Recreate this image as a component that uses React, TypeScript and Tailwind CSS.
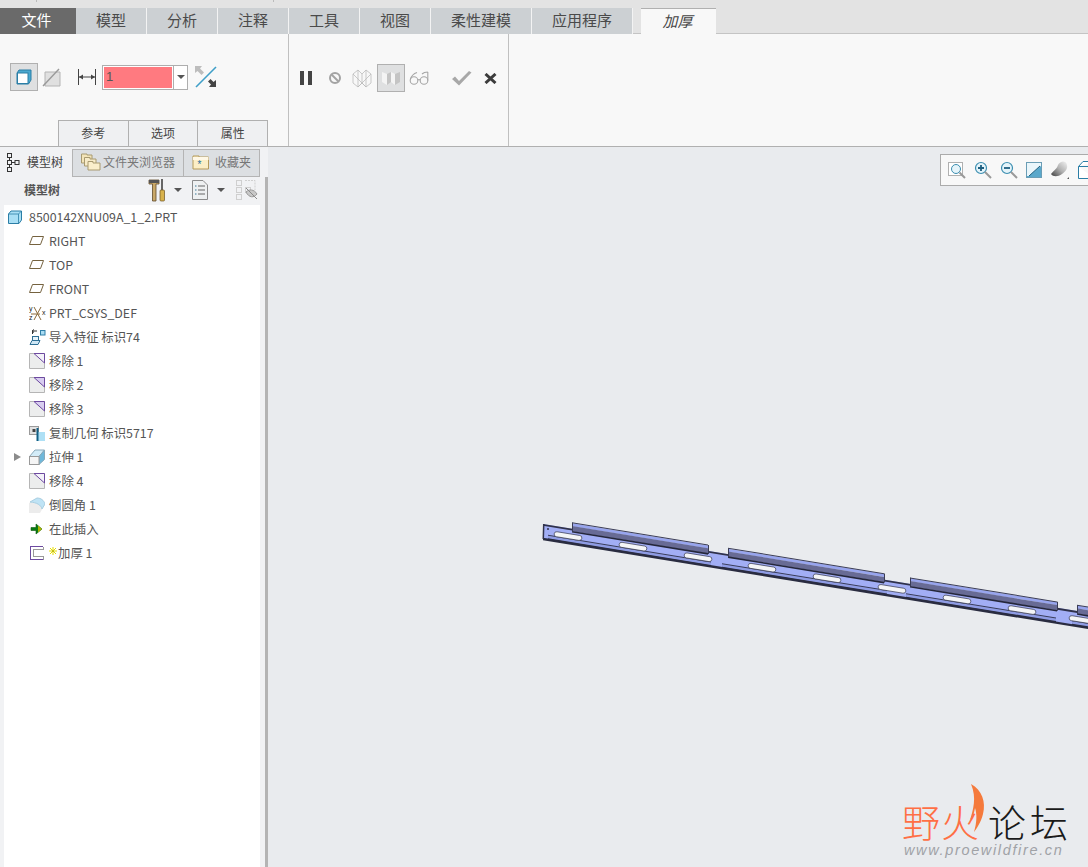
import type { ReactNode } from 'react'

const font = "font-['Noto_Sans_CJK_SC','Noto_Sans',sans-serif]"

const ribbonTabs = [
  { label: '模型', w: 'w-[71px]' },
  { label: '分析', w: 'w-[71px]' },
  { label: '注释', w: 'w-[71px]' },
  { label: '工具', w: 'w-[71px]' },
  { label: '视图', w: 'w-[71px]' },
  { label: '柔性建模', w: 'w-[101px]' },
  { label: '应用程序', w: 'w-[101px]' },
]

function Icon({ w = 16, h = 16, children }: { w?: number; h?: number; children: ReactNode }) {
  return (
    <svg width={w} height={h} viewBox={`0 0 ${w} ${h}`} fill="none" className="shrink-0">
      {children}
    </svg>
  )
}

function PlaneIcon() {
  return (
    <Icon>
      <path d="M3.5 3.5H14.5L11.5 11.5H.5Z" stroke="#75623f" fill="#fff" />
    </Icon>
  )
}

function RemoveIcon({ filled }: { filled?: boolean }) {
  return (
    <Icon>
      <path d="M.5.5H15.5V15.5H.5Z" fill="#eceded" stroke="#b5b5b5" />
      <path d="M5 .5H15.5V10Z" fill={filled ? '#d8cdf0' : '#f4f2f9'} />
      <path d="M5 .5H15.5V10Z" stroke="#6d4aa0" />
    </Icon>
  )
}

function CsysIcon() {
  return (
    <Icon w={18}>
      <path d="M5 2L12 15M12 2L5 15M2 9H11" stroke="#8a6a3a" />
      <text x="0" y="6" fontSize="7" fill="#222" fontFamily="Liberation Sans">y</text>
      <text x="0" y="15" fontSize="7" fill="#222" fontFamily="Liberation Sans">z</text>
      <text x="13" y="10" fontSize="7" fill="#222" fontFamily="Liberation Sans">x</text>
    </Icon>
  )
}

function ImportIcon() {
  return (
    <Icon w={17}>
      <path d="M3 11.5H11L9 15.5H1Z" fill="#cfe7f5" stroke="#2f6f95" />
      <rect x="3.5" y="7.5" width="6" height="4" fill="#e7f4fb" stroke="#2f6f95" />
      <rect x="11.5" y="1.5" width="4.5" height="4.5" fill="#a9dcf2" stroke="#2f7fa8" />
      <path d="M8 2H3.5M5 .5L3 2L5 3.5M3.5 2V5" stroke="#333" />
    </Icon>
  )
}

function CopyGeomIcon() {
  return (
    <Icon>
      <rect x=".5" y="1.5" width="9" height="8" fill="#e2e2e2" stroke="#9a9a9a" />
      <rect x="3.5" y="4" width="3" height="3" fill="#444" />
      <rect x="8" y="7" width="8" height="9" fill="#aee0f5" />
      <path d="M8.5 3V16" stroke="#125f84" strokeWidth="2" />
    </Icon>
  )
}

function ExtrudeIcon() {
  return (
    <Icon>
      <path d="M.5 7.5L6 1H15.5L10 7.5Z" fill="#d3ecf8" stroke="#8aa9ba" />
      <path d="M10 7.5L15.5 1V10.5L10 15.5Z" fill="#6fb8da" stroke="#8aa9ba" />
      <rect x=".5" y="7.5" width="9.5" height="8" fill="#f5f5f5" stroke="#999" />
    </Icon>
  )
}

function RoundIcon() {
  return (
    <Icon>
      <path d="M0 6L9 1C12 1 15 3 16 7L11 16H0Z" fill="#ececec" />
      <path d="M1 5L8 1C12 1 15 3.5 16 7L13 12C12 8 8 5.5 1 5Z" fill="#bfe3f5" stroke="#a9cfe2" />
    </Icon>
  )
}

function InsertIcon() {
  return (
    <Icon>
      <path d="M2 6.5H7V3L13 8L7 13V9.5H2Z" fill="#0a7a12" stroke="#0b5c10" strokeWidth=".6" />
      <path d="M9 4.5L13 8L9 11.5Z" fill="#d4c400" opacity=".8" />
    </Icon>
  )
}

function ThickenIcon() {
  return (
    <Icon>
      <path d="M14 1.5H1.5V14.5H14" stroke="#6d4aa0" shapeRendering="crispEdges" />
      <path d="M14 1.5V4.5H4.5V11.5H14V14.5" stroke="#9a9a9a" shapeRendering="crispEdges" />
    </Icon>
  )
}

function NewMark() {
  return (
    <svg width="8" height="8" viewBox="0 0 8 8" fill="none" className="relative -top-[3px] mr-[1px] inline-block">
      <path d="M4 0V8M0 4H8M1 1L7 7M7 1L1 7" stroke="#e6dc00" strokeWidth="1" />
      <circle cx="4" cy="4" r=".6" fill="#555" />
    </svg>
  )
}

function PartIcon() {
  return (
    <Icon w={14} h={14}>
      <path d="M3 1H13.5V10L11 13.5H.5V4Z" fill="#a9dff5" stroke="#2b7ea6" />
      <path d="M.5 4H10.5L13.5 1M10.5 4V13.5" stroke="#2b7ea6" strokeWidth=".8" />
    </Icon>
  )
}

function FolderIcon({ star }: { star?: boolean }) {
  if (star) {
    return (
      <Icon w={18} h={18}>
        <path d="M1 4V3H7V4H16.5V16H1Z" fill="#fbeec6" stroke="#b59a5a" />
        <path d="M1 4H16.5V7H1Z" fill="#fff8e6" />
        <text x="5.5" y="14.5" fontSize="10" fill="#1d6fa0" fontFamily="Liberation Sans">*</text>
      </Icon>
    )
  }
  return (
    <Icon w={20} h={18}>
      <path d="M.5 2V1H6V2H11V10H.5Z" fill="#f3e4b8" stroke="#a89a70" />
      <path d="M3.5 6V4.5H9V6H15V13H3.5Z" fill="#f7ebc8" stroke="#a89a70" />
      <path d="M7 10V8.5H12V10H19V17H7Z" fill="#faeecb" stroke="#a89a70" />
    </Icon>
  )
}

function TreeNodesIcon() {
  return (
    <Icon w={14} h={20}>
      <rect x="1.5" y="1.5" width="4" height="4" stroke="#333" />
      <rect x="1.5" y="8.5" width="4" height="4" stroke="#333" />
      <rect x="1.5" y="15.5" width="4" height="4" stroke="#333" />
      <rect x="9" y="8.5" width="4" height="4" stroke="#333" />
      <path d="M3.5 5.5V8.5M3.5 12.5V15.5M5.5 10.5H9" stroke="#333" />
    </Icon>
  )
}

function ToolsIcon() {
  return (
    <Icon w={18} h={24}>
      <path d="M1 2H11V6H8V23H4.5V6H1Z" fill="#c9a868" stroke="#5f4a28" strokeWidth=".8" />
      <path d="M1 2H11V5H1Z" fill="#555" />
      <rect x="13" y="1" width="2" height="11" fill="#666" />
      <rect x="12" y="12" width="4.5" height="11" rx="1" fill="#d8b24c" stroke="#6d5522" strokeWidth=".7" />
    </Icon>
  )
}

function ListDocIcon() {
  return (
    <Icon w={16} h={20}>
      <path d="M.5.5H11L15.5 5V19.5H.5Z" fill="#eef0f1" stroke="#8b8b8b" />
      <path d="M6 6H13M6 10H13M6 14H13" stroke="#666" />
      <path d="M3 6H4.5M3 10H4.5M3 14H4.5" stroke="#3a7a9a" />
    </Icon>
  )
}

function TreeHideIcon() {
  return (
    <Icon w={22} h={20}>
      <g stroke="#cfcfcf">
        <rect x=".5" y=".5" width="5" height="5" />
        <rect x=".5" y="7.5" width="5" height="5" />
        <rect x=".5" y="14.5" width="5" height="5" />
        <rect x="9.5" y="7.5" width="5" height="5" />
        <path d="M9 .5H19V10" strokeDasharray="2 1" />
      </g>
      <path d="M10 12C13 9 18 9 21 14C18 18 13 18 10 12Z" fill="#c8c8c8" stroke="#9a9a9a" />
      <path d="M10 8L21 19" stroke="#8a8a8a" />
    </Icon>
  )
}

function DropArrow() {
  return <span className="h-0 w-0 border-x-[4px] border-t-[4px] border-x-transparent border-t-[#555]" />
}

function TreeRow({ icon, label, expand }: { icon: ReactNode; label: ReactNode; expand?: boolean }) {
  return (
    <div className="relative flex h-6 items-center gap-1 pl-[25px]">
      {expand && (
        <span className="absolute left-[10px] top-[8px] h-0 w-0 border-y-[4px] border-l-[7px] border-y-transparent border-l-[#8c8c8c]" />
      )}
      <span className="flex w-[16px] shrink-0">{icon}</span>
      <span className="whitespace-nowrap">{label}</span>
    </div>
  )
}

function ModelTree() {
  return (
    <div className="h-full bg-white text-[12.4px] text-[#555]">
      <div className="flex h-6 items-center gap-[7px] pl-[4px]">
        <PartIcon />
        <span>8500142XNU09A_1_2.PRT</span>
      </div>
      <TreeRow icon={<PlaneIcon />} label="RIGHT" />
      <TreeRow icon={<PlaneIcon />} label="TOP" />
      <TreeRow icon={<PlaneIcon />} label="FRONT" />
      <TreeRow icon={<CsysIcon />} label="PRT_CSYS_DEF" />
      <TreeRow icon={<ImportIcon />} label="导入特征 标识74" />
      <TreeRow icon={<RemoveIcon />} label="移除 1" />
      <TreeRow icon={<RemoveIcon filled />} label="移除 2" />
      <TreeRow icon={<RemoveIcon filled />} label="移除 3" />
      <TreeRow icon={<CopyGeomIcon />} label="复制几何 标识5717" />
      <TreeRow expand icon={<ExtrudeIcon />} label="拉伸 1" />
      <TreeRow icon={<RemoveIcon />} label="移除 4" />
      <TreeRow icon={<RoundIcon />} label="倒圆角 1" />
      <TreeRow icon={<InsertIcon />} label="在此插入" />
      <TreeRow
        icon={<ThickenIcon />}
        label={
          <>
            <NewMark />
            加厚 1
          </>
        }
      />
    </div>
  )
}

function LeftPanel() {
  return (
    <aside className="flex h-full w-[268px] shrink-0 flex-col bg-[#f1f2f4]">
      <div className="flex h-[30px] items-end text-[12px]">
        <div className="flex h-[29px] w-[72px] items-center gap-[7px] pb-[2px] pl-[6px] text-[#444]">
          <TreeNodesIcon />
          <span>模型树</span>
        </div>
        <div className="flex h-[28px] w-[112px] items-center gap-[2px] border border-[#b4b4b4] bg-[#dcdfe2] pb-[2px] pl-[8px] text-[#777]">
          <FolderIcon />
          <span>文件夹浏览器</span>
        </div>
        <div className="flex h-[28px] w-[76px] items-center gap-[5px] border border-l-0 border-[#b4b4b4] bg-[#dcdfe2] pb-[2px] pl-[8px] text-[#777]">
          <FolderIcon star />
          <span>收藏夹</span>
        </div>
      </div>
      <div className="flex min-h-0 flex-1">
        <div className="flex min-w-0 flex-1 flex-col pl-[4px] pr-[5px]">
          <div className="flex h-[28px] items-center pb-[3px] pl-[20px] text-[12px] font-bold text-[#555]">
            <span className="w-[124px]">模型树</span>
            <ToolsIcon />
            <span className="ml-[8px] mr-[10px] flex"><DropArrow /></span>
            <ListDocIcon />
            <span className="ml-[9px] mr-[11px] flex"><DropArrow /></span>
            <TreeHideIcon />
          </div>
          <div className="min-h-0 flex-1">
            <ModelTree />
          </div>
        </div>
        <div className="w-[3px] bg-[#b4b4b4]" />
      </div>
    </aside>
  )
}

function RibbonTab({ label, w }: { label: string; w: string }) {
  return (
    <div className={`flex items-center justify-center border-r border-[#f3f3f3] bg-[#ccd0d3] pb-px text-[15px] text-[#4a4a4a] ${w}`}>
      {label}
    </div>
  )
}

function IconBox({ children, active }: { children: ReactNode; active?: boolean }) {
  return (
    <div
      className={`flex h-[28px] w-[28px] shrink-0 items-center justify-center ${
        active ? 'border border-[#b0b0b0] bg-[#dfe0e1]' : ''
      }`}
    >
      {children}
    </div>
  )
}

function ThickenControls() {
  return (
    <div className="flex h-[28px] items-center pl-[10px]">
      <IconBox active>
        <Icon>
          <path d="M3 1H15V11L12.5 15H1V4Z" fill="#4aa8cf" stroke="#2b7ea6" />
          <rect x="1.5" y="4" width="10.5" height="10.5" fill="#fff" stroke="#2b7ea6" />
        </Icon>
      </IconBox>
      <span className="ml-[4px] flex w-[20px]">
        <svg width="20" height="20" viewBox="0 0 20 20" fill="none">
          <path d="M3 5H18V19H3Z" fill="#e0e0e0" stroke="#b4b4b4" />
          <path d="M1 19L17 2" stroke="#999" strokeWidth="1.4" />
        </svg>
      </span>
      <span className="ml-[15px] flex w-[20px]">
        <svg width="20" height="18" viewBox="0 0 20 18" fill="none">
          <path d="M1.5 1V17M18.5 1V17M2 9H18" stroke="#444" />
          <path d="M2 9L6 6.5V11.5ZM18 9L14 6.5V11.5Z" fill="#444" />
        </svg>
      </span>
      <div className="ml-[5px] flex h-[25px] w-[86px] border border-[#aeaeae] bg-white">
        <div className="m-px flex w-[68px] items-center bg-[#ff7a80] pl-[2px] font-['Liberation_Sans',sans-serif] text-[13px] text-[#555]">
          1
        </div>
        <div className="flex flex-1 items-center justify-center border-l border-[#aeaeae]">
          <DropArrow />
        </div>
      </div>
      <span className="ml-[7px] flex">
        <svg width="22" height="22" viewBox="0 0 22 22" fill="none">
          <path d="M1 21L21 1" stroke="#3f9fc8" strokeWidth="1.6" />
          <path d="M0 0H7L5 2.5L9 6.5L6.5 9L2.5 5L0 7Z" fill="#bdbdbd" />
          <path d="M21 21H14L16 18.5L13 15.5L15.5 13L18.5 16L21 14Z" fill="#444" />
        </svg>
      </span>
    </div>
  )
}

function FlowControls() {
  return (
    <div className="flex h-[28px] items-center pl-[11px]">
      <span className="flex w-[12px] justify-between">
        <span className="h-[14px] w-[4px] bg-[#444]" />
        <span className="h-[14px] w-[4px] bg-[#444]" />
      </span>
      <span className="ml-[8px] flex w-[29px] justify-center">
        <svg width="14" height="14" viewBox="0 0 14 14" fill="none">
          <circle cx="7" cy="7" r="5" stroke="#a3a3a3" strokeWidth="2" />
          <path d="M3.5 3.5L10.5 10.5" stroke="#a3a3a3" strokeWidth="2" />
        </svg>
      </span>
      <span className="ml-[3px] flex w-[25px]">
        <svg width="20" height="20" viewBox="0 0 20 20" fill="none" stroke="#bbb" strokeWidth=".8">
          <path d="M1 6L6 2L10 6L14 2L19 6V15L14 19L10 15L6 19L1 15ZM6 2V19M14 2V19M1 6L14 19M19 6L6 19M10 6V15" />
        </svg>
      </span>
      <IconBox active>
        <svg width="18" height="16" viewBox="0 0 18 16" fill="none">
          <path d="M0 2L5 4V15L0 12Z" fill="#f4f4f4" />
          <path d="M5 4L9 2V12L5 15Z" fill="#c4c4c4" />
          <path d="M9 2L13 4V15L9 12Z" fill="#f4f4f4" />
          <path d="M13 4L18 2V12L13 15Z" fill="#c4c4c4" />
        </svg>
      </IconBox>
      <span className="ml-[4px] flex w-[42px]">
        <svg width="21" height="16" viewBox="0 0 21 16" fill="none" stroke="#a6a6a6" strokeWidth="1.1">
          <circle cx="5" cy="10.5" r="3.8" />
          <circle cx="15" cy="10.5" r="3.8" />
          <path d="M8.8 10Q10 9 11.2 10M1.3 9.5Q3 4 8 2.5M18.8 10.5V2M18.8 2Q15 2 13 4" />
        </svg>
      </span>
      <span className="flex w-[33px]">
        <svg width="21" height="16" viewBox="0 0 21 16" fill="none">
          <path d="M1 9L4 6.5L8 11L18 1L20.5 2.5L8 15.5Z" fill="#a8a8a8" />
        </svg>
      </span>
      <span className="flex">
        <svg width="13" height="11" viewBox="0 0 13 11" fill="none">
          <path d="M1.5 1L11.5 10M11.5 1L1.5 10" stroke="#3c3c3c" strokeWidth="3" />
        </svg>
      </span>
    </div>
  )
}

function Ribbon() {
  return (
    <div className="flex h-[113px] border-b border-[#b0b0b0] bg-[#f8f8f8]">
      <div className="flex h-full w-[289px] flex-col border-r border-[#c0c0c0]">
        <div className="mt-[29px]">
          <ThickenControls />
        </div>
        <div className="ml-[58px] mt-auto flex h-[26px] w-[210px] text-[12px] text-[#444]">
          {['参考', '选项', '属性'].map((t) => (
            <div
              key={t}
              className="flex flex-1 items-center justify-center border border-b-0 border-r-0 border-[#b0b0b0] bg-[#eff0f2] pb-[2px] last:border-r"
            >
              {t}
            </div>
          ))}
        </div>
      </div>
      <div className="h-full w-[220px] border-r border-[#c0c0c0] pt-[30px]">
        <FlowControls />
      </div>
    </div>
  )
}

function ViewToolbar() {
  return (
    <div className="absolute left-[672px] top-[7px] flex h-[32px] w-[160px] items-center gap-[8px] border border-[#ababab] bg-[#f8f8f8] pl-[7px]">
      <svg width="18" height="18" viewBox="0 0 18 18" fill="none">
        <rect x=".5" y="1.5" width="14" height="13" fill="#fff" stroke="#b0b0b0" />
        <circle cx="8" cy="8" r="4.5" fill="#e5f4fa" stroke="#3c8eb0" />
        <path d="M11.5 11.5L17 17" stroke="#999" strokeWidth="2" />
      </svg>
      <svg width="18" height="18" viewBox="0 0 18 18" fill="none">
        <circle cx="7" cy="7" r="5.5" fill="#e5f4fa" stroke="#3c8eb0" strokeWidth="1.2" />
        <path d="M4 7H10M7 4V10" stroke="#1d5f80" strokeWidth="1.8" />
        <path d="M11 11L17 17" stroke="#999" strokeWidth="2" />
      </svg>
      <svg width="18" height="18" viewBox="0 0 18 18" fill="none">
        <circle cx="7" cy="7" r="5.5" fill="#e5f4fa" stroke="#3c8eb0" strokeWidth="1.2" />
        <path d="M4 7H10" stroke="#1d5f80" strokeWidth="1.8" />
        <path d="M11 11L17 17" stroke="#999" strokeWidth="2" />
      </svg>
      <svg width="16" height="16" viewBox="0 0 16 16" fill="none">
        <rect x=".5" y=".5" width="15" height="15" fill="#5aa8cb" stroke="#6a9db5" />
        <path d="M1 1H15V4L12 6L3 14H1Z" fill="#eaf6fb" />
        <path d="M3 14L14 4" stroke="#1d5f80" />
      </svg>
      <svg width="20" height="20" viewBox="0 0 20 20" fill="none">
        <defs>
          <linearGradient id="shade" x1="0" y1="1" x2="1" y2="0">
            <stop offset="0" stopColor="#3f3f3f" />
            <stop offset="0.5" stopColor="#b0b0b0" />
            <stop offset="1" stopColor="#f2f2f2" />
          </linearGradient>
        </defs>
        <path d="M1 14C4 10 7 9 8 5C10 1 16 0 17 5C18 9 15 12 12 14C8 17 3 17 1 14Z" fill="url(#shade)" />
        <path d="M19 17V19H17Z" fill="#555" />
      </svg>
      <svg width="16" height="18" viewBox="0 0 16 18" fill="none">
        <path d="M.5 5.5L5 .5H16M.5 5.5H16M.5 5.5V17.5H16" stroke="#2b7ea6" fill="#fff" />
      </svg>
    </div>
  )
}

// the part is a long strip; y = line through its top left corner + offset v
const slope = 0.163
const y0 = (x: number) => 524 + slope * (x - 543)
const band = (x1: number, x2: number, v1: number, v2: number) =>
  `${x1},${y0(x1) + v1} ${x2},${y0(x2) + v1} ${x2},${y0(x2) + v2} ${x1},${y0(x1) + v2}`

const flanges = [
  [572, 708],
  [728, 884],
  [910, 1057],
  [1077, 1100],
]
const lowerStrips = [
  [548, 711],
  [722, 887],
  [906, 1056],
  [1072, 1100],
]
const slots = [568, 633, 698, 762, 827, 892, 957, 1022, 1083]

function Part() {
  return (
    <svg className="absolute inset-0" width="820" height="720" viewBox="268 147 820 720" fill="none">
      <polygon points={band(543, 1100, 0, 15)} fill="#a2aef5" />
      <polygon points={band(543, 1100, 0, 1.8)} fill="#30324a" />
      <polygon points={band(543, 1100, 13.8, 16.2)} fill="#2a2c40" />
      {lowerStrips.map(([a, b]) => (
        <g key={a}>
          <polygon points={band(a, b, 11, 13.8)} fill="#8f9ce4" />
          <polygon points={band(a, b, 10, 11)} fill="#383b58" />
          <polygon points={band(a, b, 13.5, 14.8)} fill="#2a2c40" />
        </g>
      ))}
      {flanges.map(([a, b]) => (
        <g key={a}>
          <polygon points={band(a, b, -5.5, -2.5)} fill="#98a5ee" />
          <polygon points={band(a, b, -6.4, -5.4)} fill="#3a3c55" />
          <polygon points={band(a, b, -2.7, 2.5)} fill="#686b95" />
          <polygon points={band(a, b, 2.2, 3.8)} fill="#25273a" />
          <polygon points={`${a},${y0(a) - 6} ${a + 1},${y0(a) - 6} ${a + 1},${y0(a) + 3} ${a},${y0(a) + 3}`} fill="#3a3c55" />
          <polygon points={`${b},${y0(b) - 6} ${b + 1},${y0(b) - 6} ${b + 1},${y0(b) + 3} ${b},${y0(b) + 3}`} fill="#3a3c55" />
        </g>
      ))}
      {slots.map((x) => (
        <rect
          key={x}
          x={x - 14}
          y={y0(x) + 5.5}
          width="28"
          height="5"
          rx="2.5"
          fill="#f4f5f7"
          stroke="#3a3c55"
          strokeWidth=".7"
          transform={`rotate(9.25 ${x} ${y0(x) + 8})`}
        />
      ))}
      <polygon points="543,524 544.5,524 544,539 542.5,539" fill="#30324a" />
      <circle cx="548" cy="529" r="1" fill="#30324a" />
    </svg>
  )
}

function Watermark() {
  return (
    <div className="absolute left-[634px] top-[634px] w-[180px] select-none leading-none">
      <svg className="absolute left-[66px] top-[1px]" width="20" height="54" viewBox="0 0 20 54" fill="none">
        <path d="M3 2C14 8 18 20 15 32C13 40 9 46 6 50C9 40 9 32 7 26C6 32 4 36 2 38C5 28 9 16 3 2Z" fill="#f57a3c" />
      </svg>
      <div className="relative mt-[20px] flex h-[40px] items-center text-[38px] font-light">
        <span className="w-[39px] text-[#ff6f45]">野</span>
        <span className="w-[47px] text-[#ff6f45]">火</span>
        <span className="w-[42px] text-[#1a1a1a]">论</span>
        <span className="text-[#1a1a1a]">坛</span>
      </div>
      <div className="ml-[2px] mt-[2px] whitespace-nowrap font-['Liberation_Sans',sans-serif] text-[14.5px] italic tracking-[1.65px] text-[#a0a2a6]">
        www.proewildfire.cn
      </div>
    </div>
  )
}

export default function App() {
  return (
    <div className={`flex h-[867px] w-[1088px] flex-col overflow-hidden bg-[#e9ebee] ${font}`}>
      <div className="flex h-[8px] bg-[#e3e3e3]">
        <span className="ml-[36px] h-[2px] w-px bg-[#bbb]" />
        <span className="ml-[236px] h-[2px] w-px bg-[#bbb]" />
      </div>
      <div className="flex h-[26px] bg-[#e3e3e3]">
        <div className="flex w-[76px] items-center justify-center bg-[#6a6a6a] pb-px pr-[3px] text-[15px] text-white">文件</div>
        {ribbonTabs.map((t) => (
          <RibbonTab key={t.label} label={t.label} w={t.w} />
        ))}
        <div className="w-[8px] border-b border-[#c4c4c4]" />
        <div className="flex w-[75px] items-center justify-center border-t border-[#b0b0b0] bg-[#f8f8f8] pb-px pr-[2px] text-[15px] italic text-[#444]">
          加厚
        </div>
        <div className="flex-1 border-b border-[#c4c4c4]" />
      </div>
      <Ribbon />
      <div className="flex min-h-0 flex-1">
        <LeftPanel />
        <main className="relative min-w-0 flex-1 overflow-hidden bg-[#e9ebee]">
          <Part />
          <ViewToolbar />
          <Watermark />
        </main>
      </div>
    </div>
  )
}
